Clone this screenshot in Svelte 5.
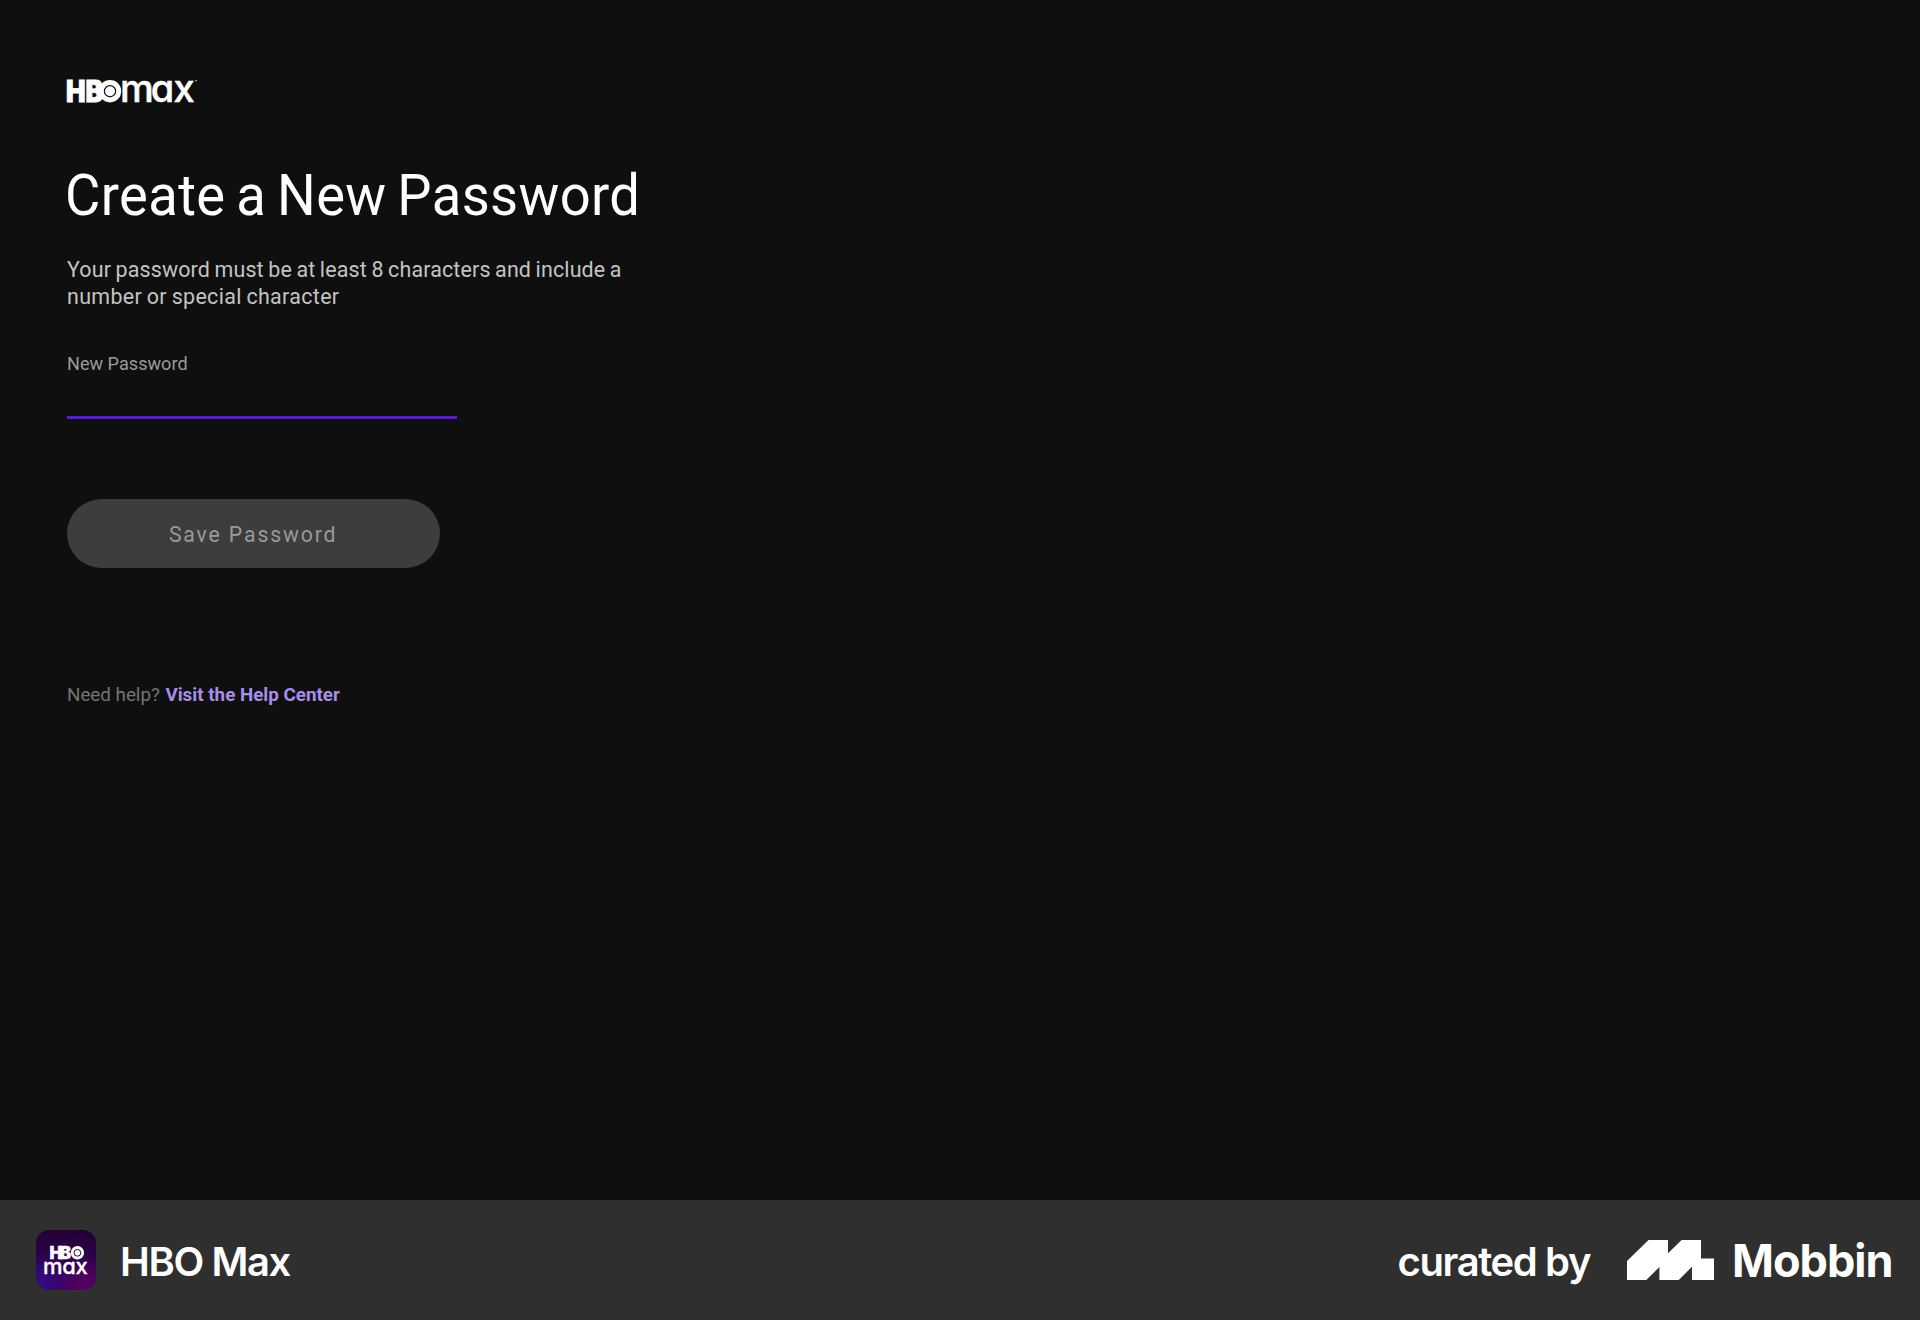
<script>
  const appName = 'HBO Max';
  let password = $state('');
</script>

<div class="page">
  <main class="screen">
    <svg class="brand" viewBox="0 0 132 24" role="img" aria-label="HBO Max">
      <text class="heavy" x="-1.1" y="22.9" font-size="29.4" textLength="37" lengthAdjust="spacingAndGlyphs">HB</text>
      <circle cx="43" cy="12.2" r="11.2" />
      <circle class="ring" cx="43" cy="12.2" r="5.6" />
      <text class="thin" x="52.9 83.8 106.4" y="22.8" font-size="38">max</text>
      <circle cx="129" cy="1.8" r="0.7" />
    </svg>

    <h1>Create a New Password</h1>
    <p class="rule">
      Your password must be at least 8 characters and include a<br />
      <span>number or special character</span>
    </p>

    <label class="field">
      <span>New Password</span>
      <input type="password" bind:value={password} />
    </label>

    <button type="button"><span>Save Password</span></button>

    <p class="help"><span>Need help?</span><a href="#help">Visit the Help Center</a></p>
  </main>

  <footer>
    <div class="app">
      <svg class="tile" viewBox="0 0 60 60" aria-hidden="true">
        <defs>
          <linearGradient id="base" x1="0" y1="0" x2="0" y2="1">
            <stop offset="0" stop-color="#230036" />
            <stop offset="0.4" stop-color="#2b0045" />
            <stop offset="1" stop-color="#3c0068" />
          </linearGradient>
          <radialGradient id="blue" cx="0.05" cy="0.95" r="0.6">
            <stop offset="0" stop-color="#320f82" />
            <stop offset="1" stop-color="#320f82" stop-opacity="0" />
          </radialGradient>
          <radialGradient id="pink" cx="0.85" cy="0.95" r="0.5">
            <stop offset="0" stop-color="#5a0062" />
            <stop offset="1" stop-color="#5a0062" stop-opacity="0" />
          </radialGradient>
        </defs>
        <rect width="60" height="60" rx="13" fill="url(#base)" />
        <rect width="60" height="60" rx="13" fill="url(#blue)" />
        <rect width="60" height="60" rx="13" fill="url(#pink)" />
        <text>
          <tspan class="heavy small" x="13.4 23.8" y="29" font-size="17">HB</tspan>
          <tspan class="thin small" x="7 26.2 39.6" y="43.8" font-size="22">max</tspan>
        </text>
        <circle cx="41.4" cy="22.8" r="6.7" />
        <circle class="ring dark" cx="41.4" cy="22.8" r="3.4" />
      </svg>
      <span class="name">{appName}</span>
    </div>
    <div class="credit">
      <span class="by">curated by</span>
      <svg class="mark" viewBox="0 0 87 40" aria-hidden="true">
        <path d="M21.5 0H41V13.3L54.6 0H74V18.4H87V40H65V26.7L51.8 40H32.4V27L19.3 40H0V21Z" />
      </svg>
      <span class="mobbin">Mobbin</span>
    </div>
  </footer>
</div>

<style>
  :global(body) {
    background: #0f0f0f;
  }
  .page {
    width: 1920px;
    height: 1320px;
    display: flex;
    flex-direction: column;
    background: #0f0f0f;
    color: #fff;
    font-family: Roboto, 'Liberation Sans', sans-serif;
    overflow: hidden;
  }
  .screen {
    flex: 1;
    display: flex;
    flex-direction: column;
    align-items: flex-start;
    padding: 79px 67px 0;
  }
  svg {
    display: block;
    fill: #fff;
    flex: none;
  }
  .brand {
    width: 132px;
    height: 24px;
    overflow: visible;
  }
  .heavy {
    font-family: Inter, sans-serif;
    font-weight: 900;
    stroke: #fff;
    stroke-width: 0.8;
  }
  .thin {
    font-family: Inter, sans-serif;
    font-weight: 500;
    font-feature-settings: 'cv11';
    stroke: #fff;
    stroke-width: 0.5;
  }
  .small {
    stroke-width: 0.3;
  }
  .ring {
    fill: none;
    stroke: #0f0f0f;
    stroke-width: 1.2;
  }
  .dark {
    stroke: #2b0045;
    stroke-width: 1;
  }
  h1 {
    margin: 58px 0 0 -2px;
    font-size: 57px;
    line-height: 70px;
    font-weight: 400;
    letter-spacing: 0.4px;
    word-spacing: -3.2px;
    white-space: nowrap;
    transform: scaleX(0.953);
    transform-origin: 0 0;
  }
  .rule {
    margin: 25px 0 0;
    font-size: 22.4px;
    line-height: 27px;
    color: #c4c4c4;
    white-space: nowrap;
    letter-spacing: 0.15px;
    word-spacing: -1px;
    transform: scaleX(0.957);
    transform-origin: 0 0;
  }
  .rule span {
    letter-spacing: 0.35px;
  }
  .field {
    display: flex;
    flex-direction: column;
    align-items: flex-start;
    width: 390px;
    height: 64px;
    margin-top: 42px;
    font-size: 19px;
    line-height: 24px;
    color: #9b9b9b;
    border-bottom: 3px solid #5822b4;
  }
  .field span {
    transform: scaleX(0.953);
    transform-origin: 0 0;
  }
  .field input {
    flex: 1;
    width: 100%;
    min-height: 0;
    padding: 0;
    border: 0;
    outline: 0;
    background: none;
    color: #fff;
  }
  button {
    width: 373px;
    height: 69px;
    margin-top: 79.5px;
    padding: 2px 0 0;
    border: 0;
    border-radius: 35px;
    background: #3d3d3d;
    color: #9a9a9a;
    font: 400 22.4px/28px Roboto, sans-serif;
    letter-spacing: 2px;
  }
  button span {
    display: inline-block;
    transform: scaleX(0.945);
  }
  .help {
    display: flex;
    gap: 5.5px;
    margin: 115px 0 0;
    font-size: 18.8px;
    line-height: 24px;
    color: #757575;
    white-space: nowrap;
  }
  .help a {
    color: #a78ee8;
    font-weight: 700;
    text-decoration: none;
  }
  footer {
    height: 120px;
    display: flex;
    justify-content: space-between;
    align-items: center;
    padding: 0 27.5px 0 36px;
    box-sizing: border-box;
    background: #2f2f2f;
    font-family: Inter, sans-serif;
    white-space: nowrap;
  }
  .app,
  .credit {
    display: flex;
    align-items: center;
  }
  .tile {
    width: 60px;
    height: 60px;
  }
  .name,
  .by {
    padding-top: 2px;
    font-size: 40px;
    font-weight: 600;
    letter-spacing: -1.4px;
  }
  .name {
    margin-left: 24px;
  }
  .mark {
    width: 87px;
    height: 40px;
    margin: 0 18.5px 0 36.5px;
  }
  .mobbin {
    font-size: 45px;
    font-weight: 700;
    letter-spacing: -1px;
  }
</style>
